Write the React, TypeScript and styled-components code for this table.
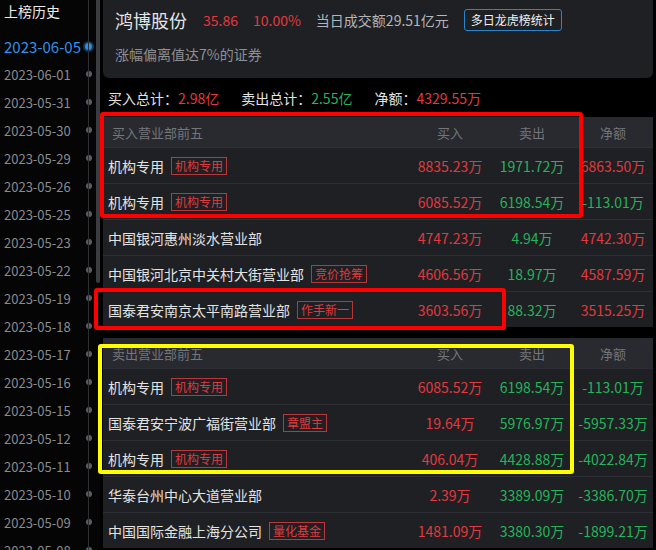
import React from "react";
import styled, { createGlobalStyle } from "styled-components";

const Global = createGlobalStyle`
  html, body { margin: 0; padding: 0; background: #000; }
  body { font-family: "Noto Sans CJK SC", "Noto Sans", sans-serif; }
  * { box-sizing: border-box; }
`;

const Page = styled.div`
  position: relative;
  display: flex;
  width: 656px;
  height: 550px;
  overflow: hidden;
  background: #000;
`;

const Sidebar = styled.aside`
  position: relative;
  width: 100px;
  flex: none;
  background: #050506;
  &::before {
    content: "";
    position: absolute;
    left: 88px;
    top: 0;
    bottom: 0;
    width: 1px;
    background: #2e2f33;
  }
`;

const Thumb = styled.div`
  position: absolute;
  right: 0;
  top: 0;
  width: 4px;
  height: 283px;
  border-radius: 0 0 3px 3px;
  background: #3b3c40;
`;

const SideTitle = styled.div`
  height: 32px;
  padding: 0 0 0 4px;
  line-height: 22px;
  font-size: 14px;
  color: #ececec;
`;

const DateItem = styled.div<{ $active?: boolean }>`
  display: grid;
  grid-template-columns: 80px 9px;
  align-items: center;
  height: 28px;
  padding-left: 4px;
  font-size: ${(p) => (p.$active ? "15px" : "13px")};
  color: ${(p) => (p.$active ? "#3590e8" : "#8a8b8f")};
  white-space: nowrap;
`;

const Dot = styled.span<{ $active?: boolean }>`
  justify-self: center;
  width: ${(p) => (p.$active ? "7px" : "6px")};
  height: ${(p) => (p.$active ? "7px" : "6px")};
  border-radius: 50%;
  background: ${(p) => (p.$active ? "#2f8de4" : "#5c5d61")};
  box-shadow: ${(p) => (p.$active ? "0 0 0 2px rgba(47,141,228,0.35)" : "none")};
`;

const Main = styled.main`
  flex: 1;
  display: flex;
  flex-direction: column;
  padding: 0 3px 0 3px;
`;

const Card = styled.section`
  height: 78px;
  background: #1e2024;
  border-radius: 0 0 6px 6px;
  padding: 9px 12px 0 12px;
  display: flex;
  flex-direction: column;
  gap: 13px;
`;

const TitleRow = styled.div`
  display: flex;
  align-items: center;
  height: 22px;
  white-space: nowrap;
`;

const StockName = styled.span`
  font-size: 18px;
  color: #e6e6e6;
  margin-right: 16px;
`;

const Quote = styled.span`
  font-size: 14px;
  color: #e2393d;
  margin-right: 15px;
`;

const Turnover = styled.span`
  font-size: 14px;
  color: #b4b5b8;
  margin-right: 15px;
`;

const StatButton = styled.button`
  height: 22px;
  padding: 0 6px;
  border: 1px solid #2a86cc;
  border-radius: 3px;
  background: transparent;
  color: #f2f2f2;
  font-family: inherit;
  font-size: 12px;
  line-height: 20px;
  cursor: pointer;
`;

const Subtitle = styled.div`
  font-size: 14px;
  color: #8d8f94;
  line-height: 20px;
`;

const Totals = styled.div`
  display: flex;
  align-items: center;
  gap: 22px;
  height: 39px;
  padding-left: 5px;
  font-size: 14px;
  color: #e4e4e4;
  white-space: nowrap;
`;

const Val = styled.span<{ $tone: "up" | "down" }>`
  color: ${(p) => (p.$tone === "up" ? "#e2393d" : "#27b35a")};
`;

const Table = styled.div<{ $gap?: number }>`
  display: flex;
  flex-direction: column;
  margin-top: ${(p) => p.$gap ?? 0}px;
`;

const HeadRow = styled.div`
  display: grid;
  grid-template-columns: 1fr 82px 82px 80px;
  align-items: center;
  height: 30px;
  background: #282a2f;
  font-size: 13px;
  color: #74767b;
`;

const HeadTitle = styled.span`
  padding-left: 9px;
`;

const HeadCell = styled.span`
  text-align: center;
`;

const Row = styled.div`
  display: grid;
  grid-template-columns: 1fr 82px 82px 80px;
  align-items: center;
  height: 36px;
  background: #1e2024;
  border-top: 1px solid #2d2f34;
  white-space: nowrap;
`;

const NameCell = styled.div`
  display: flex;
  align-items: center;
  gap: 7px;
  padding-left: 5px;
  font-size: 14px;
  color: #e3e3e3;
`;

const Tag = styled.span`
  border: 1px solid #b8373a;
  color: #de3c3f;
  font-size: 12px;
  line-height: 16px;
  padding: 0 3px;
`;

const Num = styled.span<{ $tone: "up" | "down" }>`
  text-align: center;
  font-size: 14px;
  color: ${(p) => (p.$tone === "up" ? "#e2393d" : "#27b35a")};
`;

const Mark = styled.div<{ $color: string; $x: number; $y: number; $w: number; $h: number }>`
  position: absolute;
  left: ${(p) => p.$x}px;
  top: ${(p) => p.$y}px;
  width: ${(p) => p.$w}px;
  height: ${(p) => p.$h}px;
  border: 4px solid ${(p) => p.$color};
  border-radius: 3px;
  pointer-events: none;
`;

type R = { name: string; tag?: string; buy: string; sell: string; net: string };

const buyRows: R[] = [
  { name: "机构专用", tag: "机构专用", buy: "8835.23万", sell: "1971.72万", net: "6863.50万" },
  { name: "机构专用", tag: "机构专用", buy: "6085.52万", sell: "6198.54万", net: "-113.01万" },
  { name: "中国银河惠州淡水营业部", buy: "4747.23万", sell: "4.94万", net: "4742.30万" },
  { name: "中国银河北京中关村大街营业部", tag: "竞价抢筹", buy: "4606.56万", sell: "18.97万", net: "4587.59万" },
  { name: "国泰君安南京太平南路营业部", tag: "作手新一", buy: "3603.56万", sell: "88.32万", net: "3515.25万" },
];

const sellRows: R[] = [
  { name: "机构专用", tag: "机构专用", buy: "6085.52万", sell: "6198.54万", net: "-113.01万" },
  { name: "国泰君安宁波广福街营业部", tag: "章盟主", buy: "19.64万", sell: "5976.97万", net: "-5957.33万" },
  { name: "机构专用", tag: "机构专用", buy: "406.04万", sell: "4428.88万", net: "-4022.84万" },
  { name: "华泰台州中心大道营业部", buy: "2.39万", sell: "3389.09万", net: "-3386.70万" },
  { name: "中国国际金融上海分公司", tag: "量化基金", buy: "1481.09万", sell: "3380.30万", net: "-1899.21万" },
];

const dates = [
  "2023-06-05", "2023-06-01", "2023-05-31", "2023-05-30", "2023-05-29", "2023-05-26",
  "2023-05-25", "2023-05-23", "2023-05-22", "2023-05-19", "2023-05-18", "2023-05-17",
  "2023-05-16", "2023-05-15", "2023-05-12", "2023-05-11", "2023-05-10", "2023-05-09",
  "2023-05-08",
];

const tone = (v: string) => (v.startsWith("-") ? "down" : "up");

function BrokerTable({ title, rows, gap }: { title: string; rows: R[]; gap?: number }) {
  return (
    <Table $gap={gap}>
      <HeadRow>
        <HeadTitle>{title}</HeadTitle>
        <HeadCell>买入</HeadCell>
        <HeadCell>卖出</HeadCell>
        <HeadCell>净额</HeadCell>
      </HeadRow>
      {rows.map((r, i) => (
        <Row key={i}>
          <NameCell>
            {r.name}
            {r.tag && <Tag>{r.tag}</Tag>}
          </NameCell>
          <Num $tone="up">{r.buy}</Num>
          <Num $tone="down">{r.sell}</Num>
          <Num $tone={tone(r.net)}>{r.net}</Num>
        </Row>
      ))}
    </Table>
  );
}

export default function App() {
  return (
    <>
      <Global />
      <Page>
        <Sidebar>
          <Thumb />
          <SideTitle>上榜历史</SideTitle>
          {dates.map((d, i) => (
            <DateItem key={d} $active={i === 0}>
              <span>{d}</span>
              <Dot $active={i === 0} />
            </DateItem>
          ))}
        </Sidebar>
        <Main>
          <Card>
            <TitleRow>
              <StockName>鸿博股份</StockName>
              <Quote>35.86</Quote>
              <Quote>10.00%</Quote>
              <Turnover>当日成交额29.51亿元</Turnover>
              <StatButton>多日龙虎榜统计</StatButton>
            </TitleRow>
            <Subtitle>涨幅偏离值达7%的证券</Subtitle>
          </Card>
          <Totals>
            <span>买入总计：<Val $tone="up">2.98亿</Val></span>
            <span>卖出总计：<Val $tone="down">2.55亿</Val></span>
            <span>净额：<Val $tone="up">4329.55万</Val></span>
          </Totals>
          <BrokerTable title="买入营业部前五" rows={buyRows} />
          <BrokerTable title="卖出营业部前五" rows={sellRows} gap={11} />
        </Main>
        <Mark $color="#ff0000" $x={100} $y={112} $w={483} $h={106} />
        <Mark $color="#ff0000" $x={94} $y={288} $w={412} $h={42} />
        <Mark $color="#ffff00" $x={98} $y={344} $w={476} $h={130} />
      </Page>
    </>
  );
}
